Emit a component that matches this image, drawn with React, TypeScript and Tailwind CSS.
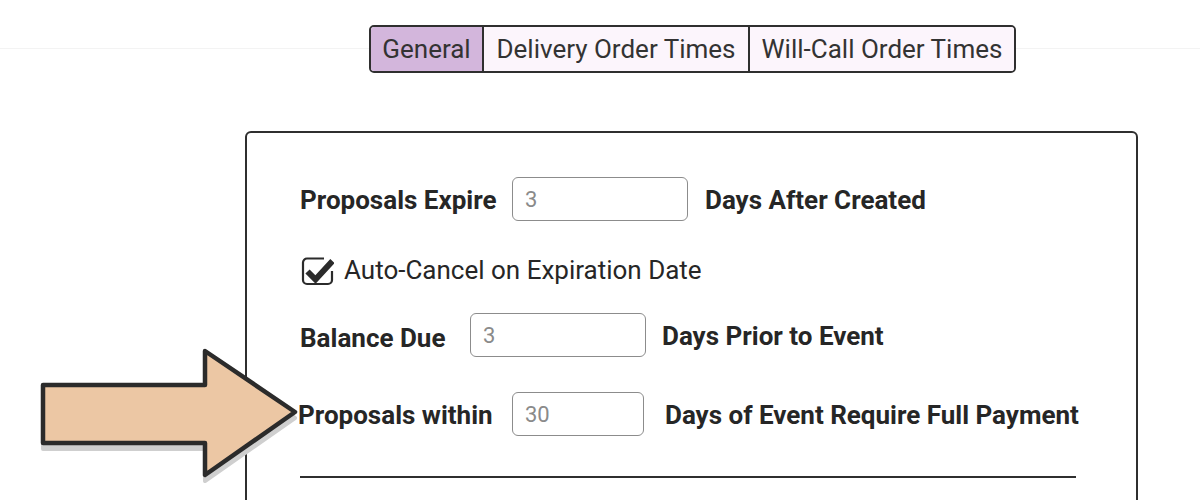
const font = { fontFamily: "Roboto, 'Liberation Sans', sans-serif" };

function NumberBox({ value, width }: { value: string; width: string }) {
  return (
    <div
      className={`${width} h-[44px] shrink-0 rounded-[6px] border-[1.5px] border-[#8c8c8c] bg-white pl-[12px] flex items-center text-[22px] font-normal text-[#8a8a8a]`}
    >
      {value}
    </div>
  );
}

function CheckIcon() {
  return (
    <svg width="34" height="32" viewBox="0 0 34 32" className="shrink-0">
      <path
        d="M24 4.5 H7 A4 4 0 0 0 3 8.5 V26 A4 4 0 0 0 7 30 H28 A4 4 0 0 0 32 26 V17"
        fill="none"
        stroke="#2b2b2b"
        strokeWidth="2.2"
      />
      <path d="M7.5 17.5 L15.5 25.5 L32.5 7" fill="none" stroke="#2b2b2b" strokeWidth="6" strokeLinejoin="miter" />
    </svg>
  );
}

function Arrow() {
  return (
    <svg width="270" height="140" viewBox="0 0 270 140" className="absolute left-[36px] top-[344px]">
      <path
        d="M7 42 H169 V7 L259 70 L169 133 V101 H7 Z"
        transform="translate(0 4)"
        fill="#cfcfcf"
        stroke="#cfcfcf"
        strokeWidth="4"
        strokeLinejoin="round"
      />
      <path
        d="M7 41 H169 V7 L259 68 L169 131 V99 H7 Z"
        fill="#ecc7a4"
        stroke="#2b2b2b"
        strokeWidth="4.5"
        strokeLinejoin="round"
      />
    </svg>
  );
}

export default function App() {
  return (
    <div className="relative w-[1200px] h-[500px] overflow-hidden bg-white text-[#262626]" style={font}>
      <div className="absolute left-0 right-0 top-[48px] h-px bg-[#f3f3f3]" />

      <div className="relative pt-[25px] pl-[369px]">
        <div className="flex h-[48px] w-[647px] rounded-[5px] border-2 border-[#2f2f2f] overflow-hidden text-[26px] text-[#333]">
          <div className="w-[113px] flex items-center justify-center bg-[#d3b6dc] border-r-2 border-[#2f2f2f]">General</div>
          <div className="w-[266px] flex items-center justify-center bg-[#fcf5fc] border-r-2 border-[#2f2f2f]">
            Delivery Order Times
          </div>
          <div className="flex-1 flex items-center justify-center bg-[#fcf5fc]">Will-Call Order Times</div>
        </div>
      </div>

      <div className="relative ml-[245px] mt-[58px] w-[893px] h-[400px] rounded-[6px] border-2 border-[#2f2f2f] pl-[53px] pt-[44px]">
        <div className="flex items-center h-[44px] text-[26px] font-bold">
          <div className="w-[212px] pt-[3px]">Proposals Expire</div>
          <NumberBox value="3" width="w-[176px]" />
          <div className="ml-[17px] pt-[3px]">Days After Created</div>
        </div>

        <div className="flex items-center h-[32px] mt-[33px] text-[26px]">
          <CheckIcon />
          <div className="ml-[10px]">Auto-Cancel on Expiration Date</div>
        </div>

        <div className="flex items-center h-[44px] mt-[27px] text-[26px] font-bold">
          <div className="w-[170px] pt-[6px]">Balance Due</div>
          <NumberBox value="3" width="w-[176px]" />
          <div className="ml-[16px] pt-[3px]">Days Prior to Event</div>
        </div>

        <div className="flex items-center h-[44px] mt-[35px] text-[26px] font-bold">
          <div className="w-[214px] -ml-[2px] pt-[3px]">Proposals within</div>
          <NumberBox value="30" width="w-[132px]" />
          <div className="ml-[21px] pt-[3px]">Days of Event Require Full Payment</div>
        </div>

        <div className="mt-[40px] w-[776px] h-[2px] bg-[#2f2f2f]" />
      </div>

      <Arrow />
    </div>
  );
}
